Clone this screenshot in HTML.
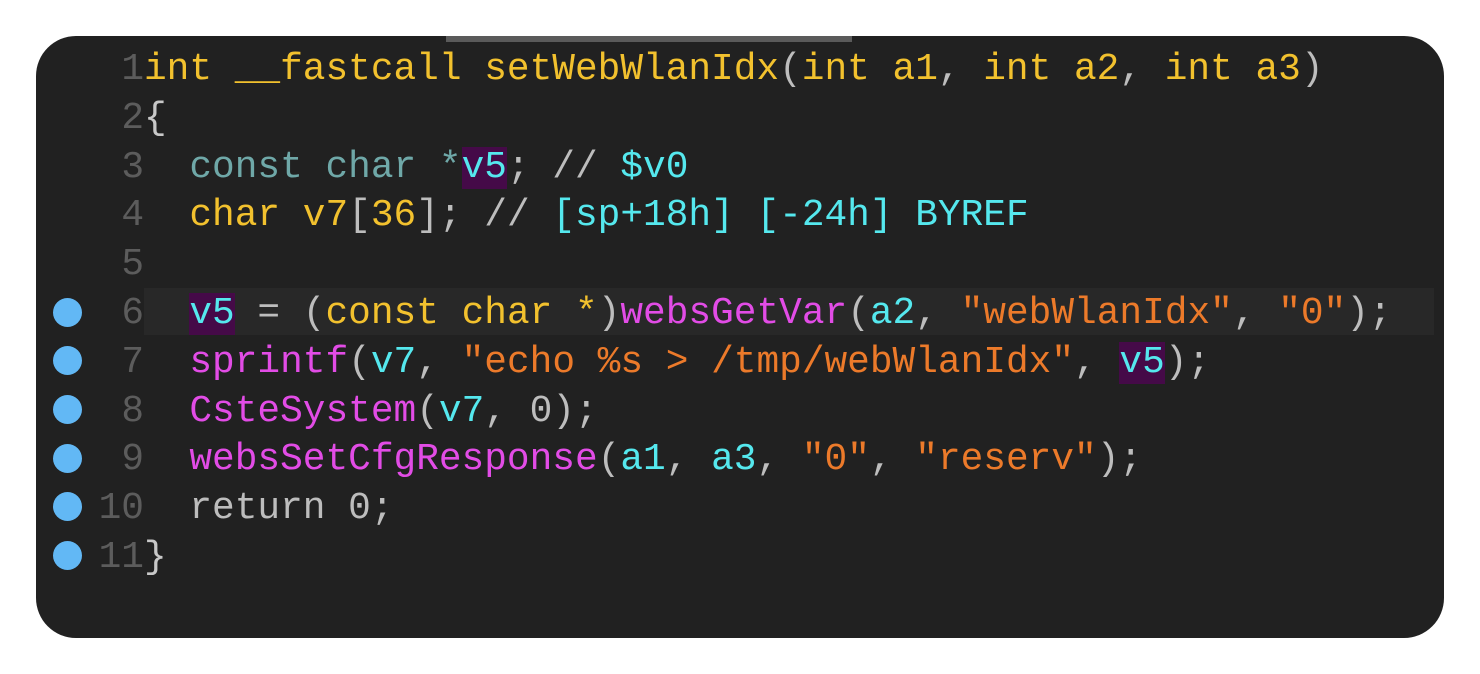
<!DOCTYPE html>
<html><head><meta charset="utf-8"><style>
html,body{margin:0;padding:0;background:#fff;width:1480px;height:674px;overflow:hidden}
.panel{position:absolute;left:36px;top:36px;width:1408px;height:602px;background:#212121;border-radius:40px;overflow:hidden}
.bar{position:absolute;left:410px;top:0;width:406px;height:6px;background:#5a5a5a}
.hl{position:absolute;left:108px;top:252px;width:1290px;height:47px;background:#282828}
.code{position:absolute;left:0;top:10px;font-family:"Liberation Mono",monospace;font-size:37.8px;line-height:48.8px;white-space:pre;color:#c0c0c0}
.ln{display:inline-block;width:108px;text-align:right;color:#5c5c5c}
.dot{position:absolute;left:17px;width:29px;height:29px;border-radius:50%;background:#62b8f5}
.y{color:#f2c12e}.t{color:#6fa8a8}.c{color:#55e8ee}.m{color:#e24ce6}.o{color:#ec7a2a}.g{color:#bdbdbd}.w{color:#c8c8c8}
.v{background:#450a48}
</style></head><body>
<div class="panel">
<div class="bar"></div>
<div class="hl"></div>
<div class="dot" style="top:262px"></div>
<div class="dot" style="top:310px"></div>
<div class="dot" style="top:359px"></div>
<div class="dot" style="top:408px"></div>
<div class="dot" style="top:456px"></div>
<div class="dot" style="top:505px"></div>
<div class="code"><span class="ln">1</span><span class="y">int __fastcall setWebWlanIdx</span><span class="g">(</span><span class="y">int a1</span><span class="g">, </span><span class="y">int a2</span><span class="g">, </span><span class="y">int a3</span><span class="g">)</span>
<span class="ln">2</span><span class="w">{</span>
<span class="ln">3</span>  <span class="t">const char *</span><span class="c v">v5</span><span class="g">; // </span><span class="c">$v0</span>
<span class="ln">4</span>  <span class="y">char v7</span><span class="g">[</span><span class="y">36</span><span class="g">]; // </span><span class="c">[sp+18h] [-24h] BYREF</span>
<span class="ln">5</span>
<span class="ln">6</span>  <span class="c v">v5</span><span class="g"> = (</span><span class="y">const char *</span><span class="g">)</span><span class="m">websGetVar</span><span class="g">(</span><span class="c">a2</span><span class="g">, </span><span class="o">"webWlanIdx"</span><span class="g">, </span><span class="o">"0"</span><span class="g">);</span>
<span class="ln">7</span>  <span class="m">sprintf</span><span class="g">(</span><span class="c">v7</span><span class="g">, </span><span class="o">"echo %s &gt; /tmp/webWlanIdx"</span><span class="g">, </span><span class="c v">v5</span><span class="g">);</span>
<span class="ln">8</span>  <span class="m">CsteSystem</span><span class="g">(</span><span class="c">v7</span><span class="g">, 0);</span>
<span class="ln">9</span>  <span class="m">websSetCfgResponse</span><span class="g">(</span><span class="c">a1</span><span class="g">, </span><span class="c">a3</span><span class="g">, </span><span class="o">"0"</span><span class="g">, </span><span class="o">"reserv"</span><span class="g">);</span>
<span class="ln">10</span>  <span class="g">return 0;</span>
<span class="ln">11</span><span class="w">}</span></div>
</div>
</body></html>
